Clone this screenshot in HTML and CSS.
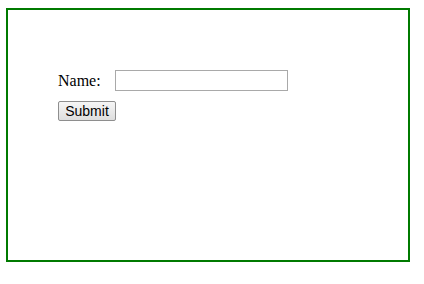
FILE: index.html
```html
<!DOCTYPE html>
<html>
<head>
<meta charset="utf-8">
<link rel="stylesheet" href="styles.css">
</head>
<body>
<div class="box">
  <form class="form">
    <div class="row">
      <label class="label" for="name">Name:</label>
      <input class="input" id="name" type="text">
    </div>
    <div class="row">
      <button class="btn" type="button">Submit</button>
    </div>
  </form>
</div>
</body>
</html>
```
FILE: styles.css
```css
html, body {
  margin: 0;
  padding: 0;
  background: #ffffff;
}
.box {
  box-sizing: border-box;
  margin: 8px 0 0 6px;
  width: 404px;
  height: 254px;
  border: 2px solid #007a00;
  padding: 60px 0 0 50px;
  font-family: "Liberation Serif", "Times New Roman", serif;
  font-size: 16px;
  color: #000;
}
.form {
  display: flex;
  flex-direction: column;
  gap: 10px;
  margin: 0;
}
.row {
  display: flex;
  align-items: center;
}
.label {
  width: 57px;
}
.input {
  box-sizing: border-box;
  width: 173px;
  height: 21px;
  border: 1px solid #a9a9a9;
  padding: 0 3px;
  margin: 0;
  font: 13px "Liberation Sans", Arial, sans-serif;
  outline: none;
}
.btn {
  box-sizing: border-box;
  width: 58px;
  height: 20px;
  margin: 0;
  padding: 0;
  border: 1px solid #8e8e8e;
  border-radius: 2px;
  background: linear-gradient(#f6f6f6, #dedede);
  font: 14px "Liberation Sans", Arial, sans-serif;
  color: #000;
}
```
